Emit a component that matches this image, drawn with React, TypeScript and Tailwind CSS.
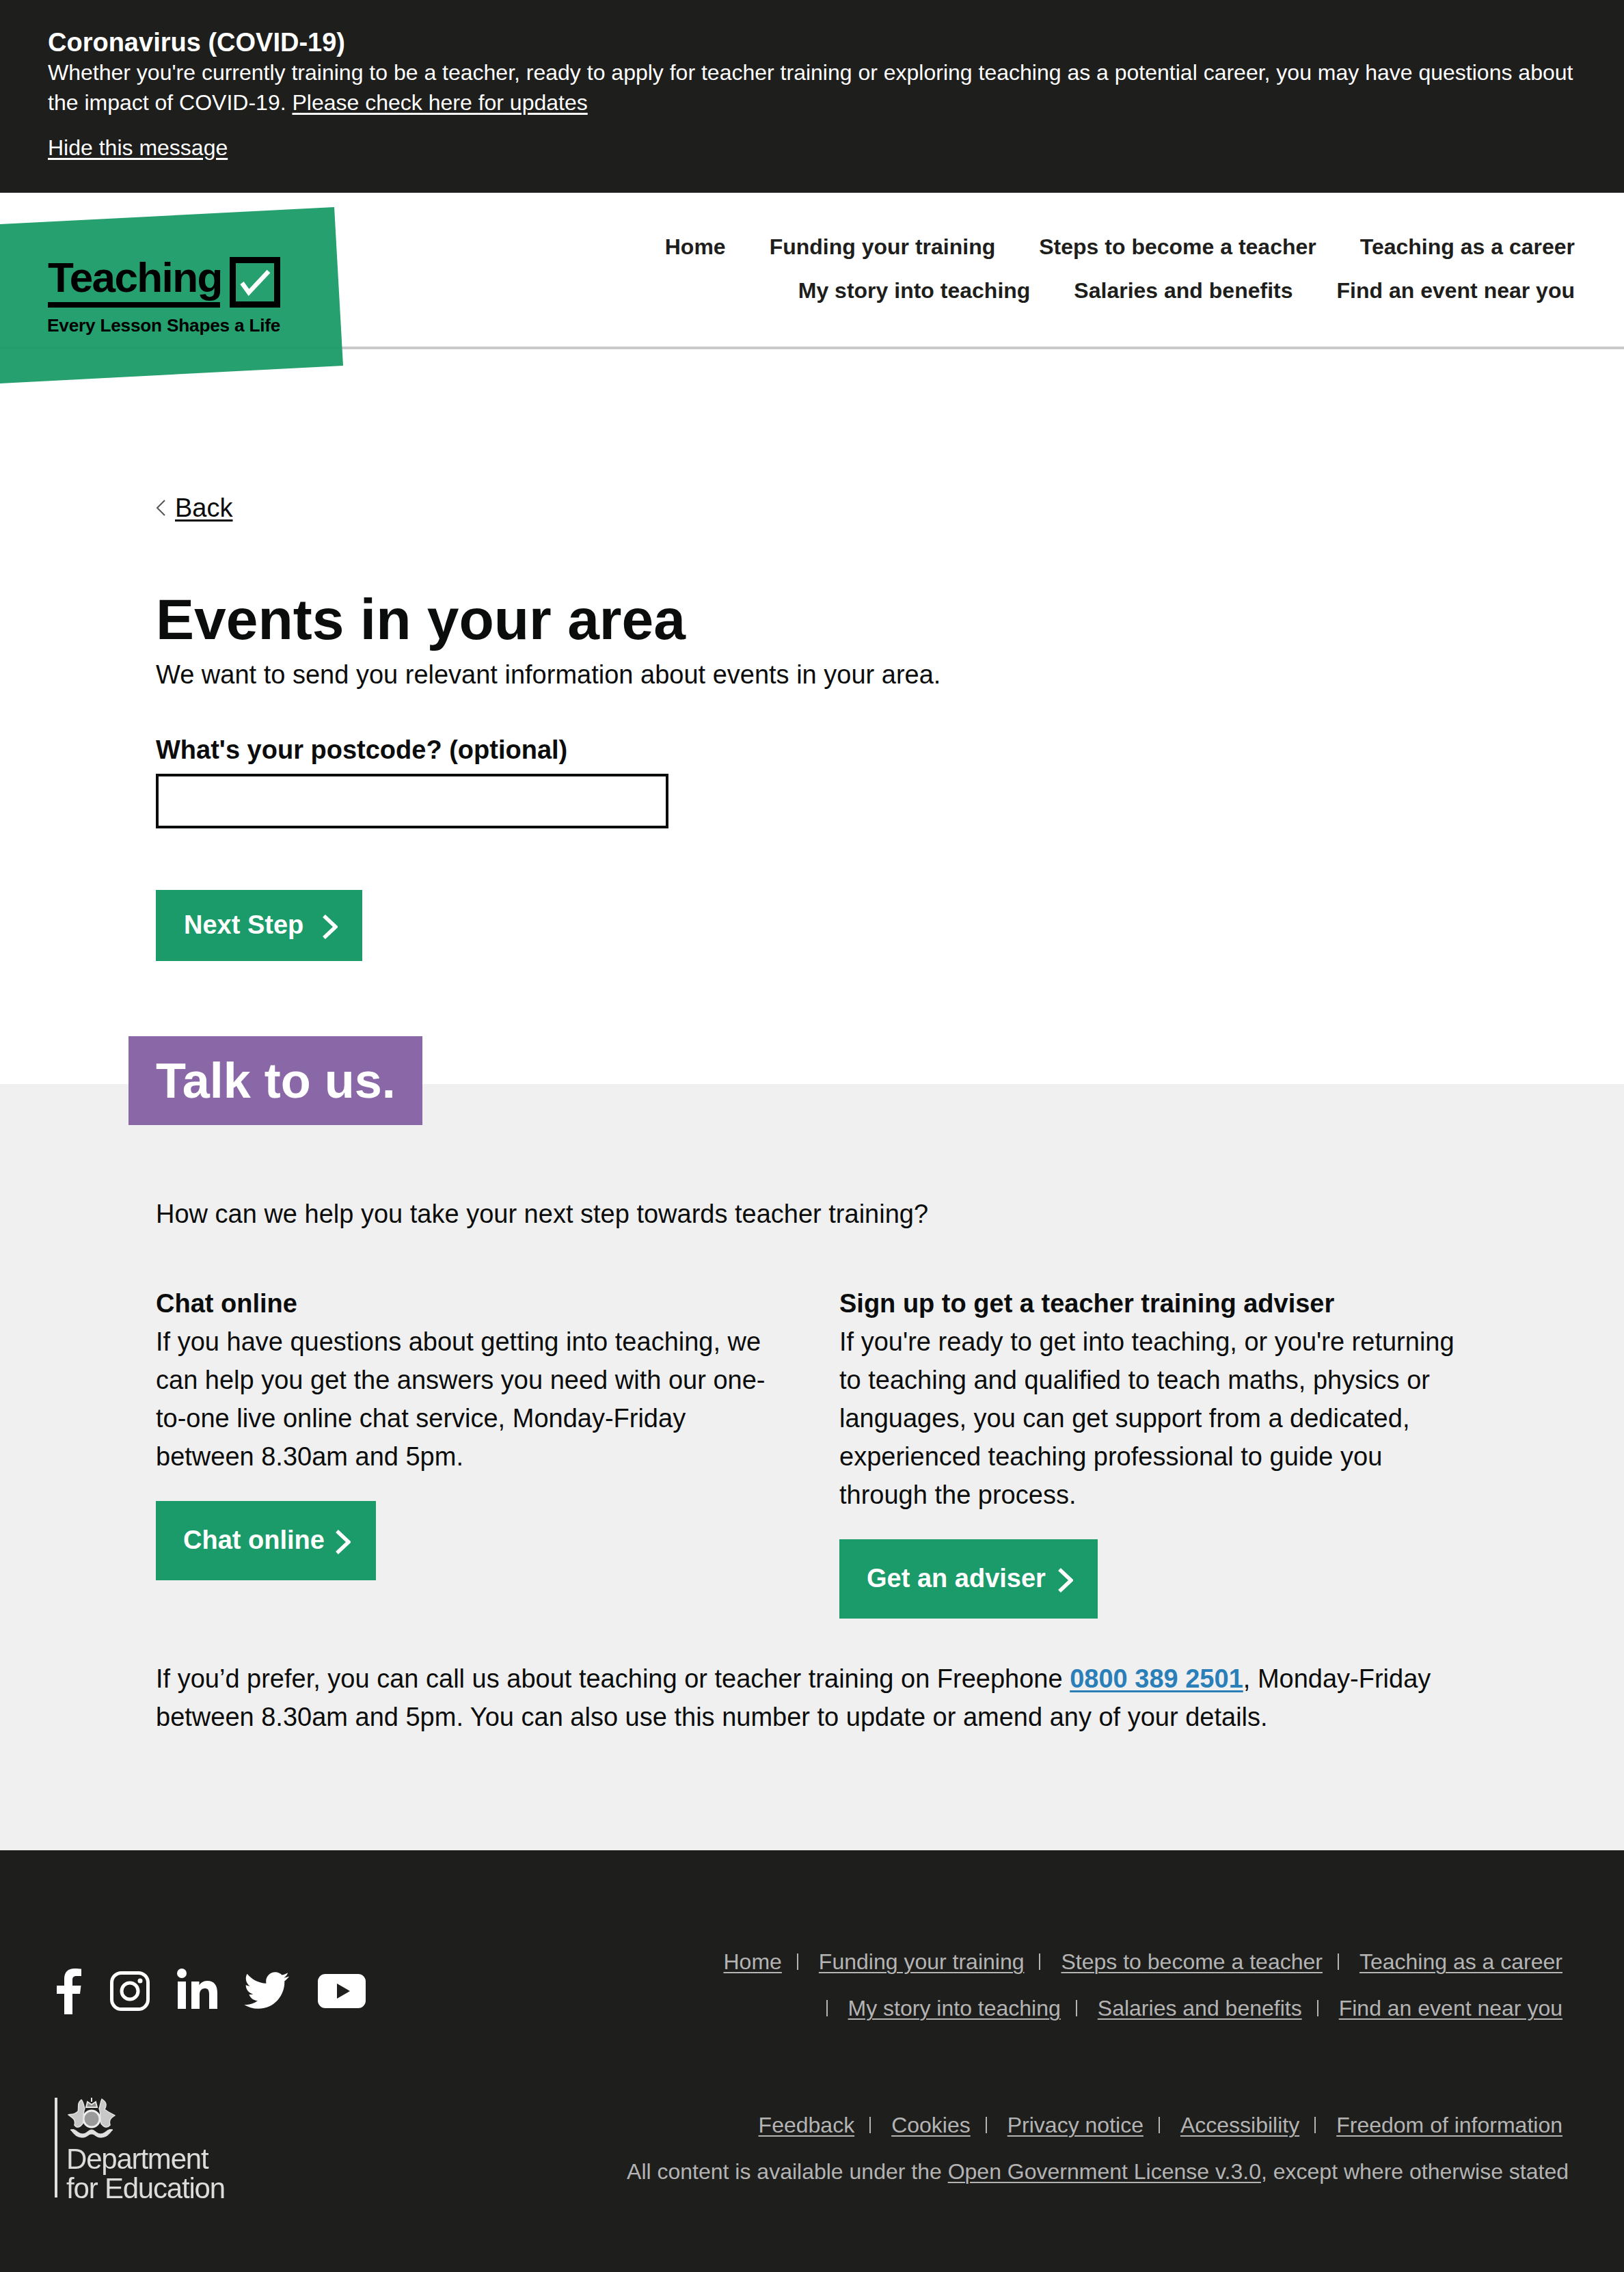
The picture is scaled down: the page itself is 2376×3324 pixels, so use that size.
import React from "react";
import { FaTwitter } from "react-icons/fa";

function Chevron({ className }: { className: string }) {
  return (
    <svg viewBox="0 0 22 36" className={className} fill="none" stroke="currentColor" strokeWidth="5.5">
      <polyline points="2,2 19,18 2,34" />
    </svg>
  );
}

function GreenButton({ label, className }: { label: string; className: string }) {
  return (
    <a className={`flex items-center bg-[#1a9b69] font-bold text-white text-[38px] ${className}`}>
      <span className="mb-[2px]">{label}</span>
      <Chevron className="w-[22px] h-[36px] mt-[3px]" />
    </a>
  );
}

function FootLinks({ items, lead }: { items: string[]; lead?: boolean }) {
  return (
    <div className="flex justify-end h-[68px] items-center">
      {items.map((t, i) => (
        <React.Fragment key={t}>
          {(i > 0 || lead) && <span className="w-[2px] h-[24px] bg-[#b4b4b4] ml-[22px] mr-[30px]" />}
          <a className="underline underline-offset-[4px] decoration-2">{t}</a>
        </React.Fragment>
      ))}
    </div>
  );
}

function Crest() {
  return (
    <svg viewBox="0 0 70 60" className="w-[70px] h-[60px] ml-[15px] blur-[0.5px]" fill="none" stroke="#e4e4e4">
      <circle cx="35" cy="31" r="12" fill="#9a9a9a" stroke="#eeeeee" strokeWidth="3" />
      <path d="M27 14 L29 6 L35 10 L41 6 L43 14 Z" fill="#8c8c8c" strokeWidth="2" />
      <path d="M35 0 V6" strokeWidth="2" />
      <path d="M20 3 C13 8 17 14 15 20 C9 26 2 24 1 25 C8 30 12 32 10 40 C14 46 19 42 22 38 C24 30 22 22 25 16 C23 10 23 6 20 3 Z" fill="#c8c8c8" strokeWidth="1.5" />
      <path d="M50 2 C56 6 58 10 54 17 C60 22 66 24 69 26 C63 30 60 32 62 40 C57 46 52 42 49 38 C47 30 49 22 46 16 C48 10 48 6 50 2 Z" fill="#c8c8c8" strokeWidth="1.5" />
      <path d="M4 47 C12 44 14 53 22 53 C28 53 30 47 35 47 C40 47 42 53 48 53 C56 53 58 44 66 47 C62 50 60 57 50 58 C42 59 40 53 35 53 C30 53 28 59 20 58 C10 57 8 50 4 47 Z" fill="#e0e0e0" strokeWidth="1" />
    </svg>
  );
}

function Facebook() {
  return (
    <svg viewBox="0 0 36 67" className="w-[36px] h-[67px]" fill="#fff">
      <path d="M11 67 V37 H0 V25 H11 V15 C11 5 17 0 26 0 C30 0 34 .3 36 .6 V11 H29 C24 11 23 13.500 23 17 V25 H35.500 L34 37 H23 V67 Z" />
    </svg>
  );
}

function Instagram() {
  return (
    <svg viewBox="0 0 58 58" className="w-[58px] h-[58px] ml-[42px] mt-[4px]" fill="none" stroke="#fff">
      <rect x="2.500" y="2.500" width="53" height="53" rx="14" strokeWidth="5" />
      <circle cx="29" cy="29" r="12" strokeWidth="5" />
      <circle cx="44" cy="14" r="3.500" fill="#fff" stroke="none" />
    </svg>
  );
}

function LinkedIn() {
  return (
    <svg viewBox="0 0 59 59" className="w-[59px] h-[59px] ml-[40px]" fill="#fff">
      <circle cx="7" cy="7" r="7" />
      <rect x="1" y="19" width="12" height="40" />
      <path d="M21 19 H32.500 V24.500 C34.500 21 38.500 18 44 18 C55 18 59 25 59 36 V59 H47 V38 C47 33 46 29 41 29 C35.500 29 33 33 33 38 V59 H21 Z" />
    </svg>
  );
}

function Youtube() {
  return (
    <svg viewBox="0 0 70 50" className="w-[70px] h-[50px] ml-[42px] mt-[8px]">
      <rect x="0" y="0" width="70" height="50" rx="11" fill="#fff" />
      <polygon points="28,14 47,25 28,36" fill="#1e1e1c" />
    </svg>
  );
}

export default function App() {
  return (
    <div className="font-['Liberation_Sans',Arial,sans-serif] text-[38px] text-[#0b0c0c] bg-white w-[2376px] overflow-hidden">
      {/* Banner */}
      <div className="bg-[#1e1e1c] text-white px-[70px] pt-[40px] pb-[44px] h-[282px] text-[32px] leading-[44px]">
        <div className="font-bold text-[38px]">Coronavirus (COVID-19)</div>
        <p>
          Whether you're currently training to be a teacher, ready to apply for teacher training or exploring teaching as a potential career, you may have questions about the impact of COVID-19.{" "}
          <a className="underline underline-offset-[4px]">Please check here for updates</a>
        </p>
        <a className="block mt-[22px] underline underline-offset-[4px]">Hide this message</a>
      </div>

      {/* Header */}
      <header className="relative h-[229px] border-b-4 border-[#cacaca] pt-[47px] pr-[72px] font-bold text-[32px] text-[#1e1e1c]">
        <nav className="flex flex-col items-end">
          <div className="flex gap-[64px] h-[64px] items-center">
            <a>Home</a>
            <a>Funding your training</a>
            <a>Steps to become a teacher</a>
            <a>Teaching as a career</a>
          </div>
          <div className="flex gap-[64px] h-[64px] items-center">
            <a>My story into teaching</a>
            <a>Salaries and benefits</a>
            <a>Find an event near you</a>
          </div>
        </nav>
        <div className="absolute left-0 top-[21px] w-[502px] h-[258px] text-black">
          <svg viewBox="0 0 502 258" className="absolute inset-0 w-full h-full">
            <polygon points="0,25 489,0 502,232 0,258" fill="#1c9c68" fillOpacity="0.96" />
          </svg>
          <div className="relative pl-[70px] pt-[73px]">
            <div className="flex items-start">
              <div className="w-[254px]">
                <div className="text-[62px] leading-[66px] h-[66px] -mt-[3px] tracking-[-1.6px] font-bold">Teaching</div>
                <div className="w-[252px] h-[8px] bg-black mt-[3px]" />
              </div>
              <div className="w-[74px] h-[74px] ml-[12px] border-[9px] border-black">
                <svg viewBox="0 0 56 56" className="w-[56px] h-[56px]" fill="none" stroke="#fff" strokeWidth="6.5">
                  <polyline points="9,29 19,43 48,12" />
                </svg>
              </div>
            </div>
            <div className="font-bold text-[26.2px] leading-[32px] mt-[10px] -ml-[1px] tracking-[-0.2px] whitespace-nowrap">Every Lesson Shapes a Life</div>
          </div>
        </div>
      </header>

      {/* Main */}
      <main className="pl-[228px] pt-[204px] h-[1075px]">
        <a className="flex items-center h-[56px]">
          <svg viewBox="0 0 14 26" className="w-[14px] h-[26px] mr-[14px]" fill="none" stroke="#555" strokeWidth="2">
            <polyline points="13,2 2,13 13,24" />
          </svg>
          <span className="underline underline-offset-[4px]">Back</span>
        </a>
        <h1 className="font-bold text-[84px] leading-[96px] mt-[87px]">Events in your area</h1>
        <p className="leading-[56px] mt-[5px]">We want to send you relevant information about events in your area.</p>
        <label className="block font-bold leading-[56px] mt-[54px]">What's your postcode? (optional)</label>
        <input className="block w-[750px] h-[80px] border-4 border-[#0b0c0c] mt-[7px] bg-white" />
        <GreenButton label="Next Step" className="mt-[90px] w-[302px] h-[104px] pl-[41px] gap-[28px]" />
      </main>

      {/* Talk to us */}
      <section className="flow-root bg-[#f0f0f0] h-[1121px]">
        <div className="-mt-[70px] ml-[188px] w-[430px] h-[130px] bg-[#8a68a8] text-white font-bold text-[72px] pl-[40px] flex items-center relative">
          Talk to us.
        </div>
        <div className="pl-[228px] leading-[56px]">
          <p className="mt-[102px]">How can we help you take your next step towards teacher training?</p>
          <div className="flex gap-[100px] mt-[75px] items-start">
            <div className="w-[900px]">
              <h3 className="font-bold">Chat online</h3>
              <p>If you have questions about getting into teaching, we can help you get the answers you need with our one-to-one live online chat service, Monday-Friday between 8.30am and 5pm.</p>
              <GreenButton label="Chat online" className="mt-[37px] w-[322px] h-[116px] pl-[40px] gap-[16px]" />
            </div>
            <div className="w-[904px]">
              <h3 className="font-bold">Sign up to get a teacher training adviser</h3>
              <p>If you're ready to get into teaching, or you're returning to teaching and qualified to teach maths, physics or languages, you can get support from a dedicated, experienced teaching professional to guide you through the process.</p>
              <GreenButton label="Get an adviser" className="mt-[37px] w-[378px] h-[116px] pl-[40px] gap-[18px]" />
            </div>
          </div>
          <p className="mt-[60px] w-[1920px]">
            If you’d prefer, you can call us about teaching or teacher training on Freephone{" "}
            <a className="font-bold text-[#2b7fb8] underline underline-offset-[4px]">0800 389 2501</a>, Monday-Friday between 8.30am and 5pm. You can also use this number to update or amend any of your details.
          </p>
        </div>
      </section>

      {/* Footer */}
      <footer className="bg-[#1e1e1c] h-[617px] pt-[129px] pl-[80px] pr-[90px] text-[32px] text-[#b4b4b4]">
        <div className="flex justify-between items-start">
          <div className="flex items-start text-white pt-[44px] pl-[3px]">
            <Facebook />
            <Instagram />
            <LinkedIn />
            <FaTwitter className="w-[66px] h-[66px] ml-[39px] mt-[-1px]" />
            <Youtube />
          </div>
          <div>
            <FootLinks items={["Home", "Funding your training", "Steps to become a teacher", "Teaching as a career"]} />
            <FootLinks lead items={["My story into teaching", "Salaries and benefits", "Find an event near you"]} />
          </div>
        </div>
        <div className="flex justify-between items-start mt-[103px]">
          <div className="border-l-4 border-[#e0e0e0] h-[146px] -mt-[6px] text-[#dcdcdc]">
            <Crest />
            <div className="pl-[13px] text-[42px] leading-[43px] tracking-[-1.2px] mt-[8px] blur-[0.5px] whitespace-nowrap">
              Department
              <br />
              for Education
            </div>
          </div>
          <div>
            <FootLinks items={["Feedback", "Cookies", "Privacy notice", "Accessibility", "Freedom of information"]} />
            <div className="h-[68px] flex items-center justify-end -mr-[9px]">
              <span>
                All content is available under the <a className="underline underline-offset-[4px] decoration-2">Open Government License v.3.0</a>, except where otherwise stated
              </span>
            </div>
          </div>
        </div>
      </footer>
    </div>
  );
}
